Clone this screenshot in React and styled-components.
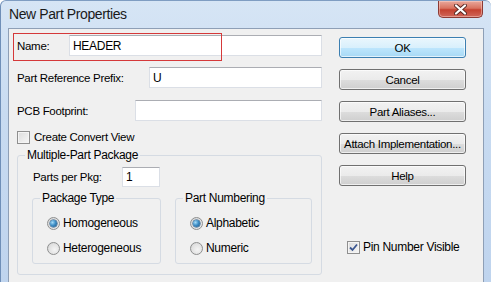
import React from 'react';
import styled, { createGlobalStyle } from 'styled-components';

const GlobalStyle = createGlobalStyle`
  html, body {
    margin: 0;
    padding: 0;
    background: #ffffff;
  }
  body {
    font-family: "Liberation Sans", Arial, sans-serif;
  }
`;

const Window = styled.div`
  position: relative;
  width: 491px;
  height: 282px;
  overflow: hidden;
  display: flex;
  flex-direction: column;
  box-sizing: border-box;
  border-left: 1px solid #6f8fb8;
  border-top: 1px solid #7f9dc2;
  border-top-left-radius: 6px;
  border-top-right-radius: 6px;
  background: linear-gradient(180deg, #d6e5f5 0%, #c8dbf1 40%, #bfd4ee 100%);
`;

const TitleBar = styled.div`
  height: 27px;
  display: flex;
  justify-content: space-between;
  align-items: flex-start;
  flex-shrink: 0;
`;

const Title = styled.div`
  margin: 5px 0 0 8px;
  font-size: 14px;
  letter-spacing: -0.4px;
  line-height: 16px;
  color: #1a1a1a;
`;

const CloseButton = styled.div`
  width: 45px;
  height: 17px;
  margin-right: 8px;
  box-sizing: border-box;
  border: 1px solid #8c3a34;
  border-top: none;
  border-radius: 0 0 5px 5px;
  background: linear-gradient(180deg, #e9a99c 0%, #d9735f 45%, #c4412f 55%, #d0665a 100%);
  box-shadow: inset 0 0 0 1px rgba(255, 220, 210, 0.45);
  display: flex;
  align-items: center;
  justify-content: center;
`;

const Client = styled.div`
  position: relative;
  flex: 1;
  margin: 0 7px 0 7px;
  border: 1px solid #8e9fb6;
  border-bottom: none;
  background: #f0f0f0;
  display: flex;
  font-size: 11.5px;
  font-weight: 400;
  letter-spacing: -0.3px;
  color: #000;
`;

const Highlight = styled.div`
  position: absolute;
  left: 4px;
  top: 4px;
  width: 207px;
  height: 26px;
  border: 1px solid #d5393a;
  pointer-events: none;
`;

const LeftCol = styled.div`
  width: 305px;
  padding: 6px 0 0 8px;
  display: flex;
  flex-direction: column;
`;

const Row = styled.div`
  display: flex;
  align-items: center;
  height: ${p => p.$h || 21}px;
  margin-top: ${p => p.$mt || 0}px;
  padding-left: ${p => p.$pl || 0}px;
`;

const Label = styled.span`
  width: ${p => p.$w}px;
  flex-shrink: 0;
  white-space: nowrap;
`;

const TextBox = styled.div`
  box-sizing: border-box;
  width: ${p => (p.$w ? `${p.$w}px` : 'auto')};
  flex: ${p => (p.$w ? 'none' : 1)};
  height: ${p => p.$h || 21}px;
  background: #ffffff;
  border: 1px solid #dbdfe6;
  border-top-color: #abadb3;
  padding: 0 3px;
  display: flex;
  align-items: center;
  font-size: 12px;
`;

const Check = styled.span`
  box-sizing: border-box;
  width: 13px;
  height: 13px;
  flex-shrink: 0;
  border: 1px solid #8f8f8f;
  background: linear-gradient(135deg, #dcdcdc 0%, #f6f6f6 100%);
  box-shadow: inset 0 0 0 1px #f4f4f4;
  margin-right: ${p => p.$gap || 4}px;
  display: flex;
  align-items: center;
  justify-content: center;
`;

const Group = styled.div`
  box-sizing: border-box;
  width: ${p => p.$w}px;
  border: 1px solid #d5dbe3;
  border-radius: 3px;
  padding: ${p => p.$pad};
  margin-top: ${p => p.$mt || 0}px;
`;

const Legend = styled.span`
  display: block;
  width: fit-content;
  margin: -8px 0 0 ${p => p.$ml ?? 7}px;
  padding: 0 2px;
  line-height: 14px;
  background: #f0f0f0;
  font-size: 12px;
`;

const SubGroups = styled.div`
  display: flex;
  gap: 14px;
  margin-top: 11px;
`;

const RadioRow = styled.div`
  display: flex;
  align-items: center;
  height: 16px;
  margin-top: ${p => p.$mt}px;
  padding-left: 14px;
  font-size: 12px;
`;

const Radio = styled.span`
  box-sizing: border-box;
  width: 13px;
  height: 13px;
  margin-right: 3px;
  border-radius: 50%;
  border: 1px solid #8e8f8f;
  background: radial-gradient(circle at 60% 60%, #f4f4f4 0%, #e1e1e1 60%, #cbcbcb 100%);
  display: flex;
  align-items: center;
  justify-content: center;
`;

const RadioDot = styled.span`
  width: 7px;
  height: 7px;
  border-radius: 50%;
  background: radial-gradient(circle at 35% 35%, #a6dcf8 0%, #3f8fc7 45%, #1c5180 100%);
  box-shadow: 0 0 0 0.5px #1e4d78;
`;

const RightCol = styled.div`
  width: 127px;
  margin-left: 17px;
  padding-top: 8px;
  display: flex;
  flex-direction: column;
  gap: 11px;
`;

const Button = styled.div`
  box-sizing: border-box;
  height: 21px;
  border-radius: 3px;
  border: 1px solid ${p => (p.$default ? '#3c7fb1' : '#707070')};
  background: ${p =>
    p.$default
      ? 'linear-gradient(180deg, #eaf6fd 0%, #d9f0fc 50%, #bee6fd 51%, #a7d9f5 100%)'
      : 'linear-gradient(180deg, #f2f2f2 0%, #ebebeb 50%, #dddddd 51%, #cfcfcf 100%)'};
  box-shadow: inset 0 0 0 1px rgba(255, 255, 255, 0.65);
  display: flex;
  align-items: center;
  justify-content: center;
  font-weight: 400;
  white-space: nowrap;
`;

const PinRow = styled.div`
  display: flex;
  align-items: center;
  margin: 43px 0 0 8px;
  height: 14px;
  font-size: 12px;
`;

const CheckMark = () => (
  <svg width="9" height="9" viewBox="0 0 9 9">
    <path d="M1 4.5 L3.5 7 L8 1.5" fill="none" stroke="#3b5690" strokeWidth="1.8" />
  </svg>
);

const CloseGlyph = () => (
  <svg width="13" height="11" viewBox="0 0 13 11">
    <path d="M2 1.5 L11 9.5 M11 1.5 L2 9.5" stroke="#5a2a25" strokeWidth="4" strokeLinecap="round" />
    <path d="M2 1.5 L11 9.5 M11 1.5 L2 9.5" stroke="#ffffff" strokeWidth="2.2" strokeLinecap="round" />
  </svg>
);

export default function App() {
  return (
    <>
      <GlobalStyle />
      <Window>
        <TitleBar>
          <Title>New Part Properties</Title>
          <CloseButton>
            <CloseGlyph />
          </CloseButton>
        </TitleBar>
        <Client>
          <Highlight />
          <LeftCol>
            <Row>
              <Label $w={52}>Name:</Label>
              <TextBox>HEADER</TextBox>
            </Row>
            <Row $mt={11}>
              <Label $w={132}>Part Reference Prefix:</Label>
              <TextBox>U</TextBox>
            </Row>
            <Row $mt={12}>
              <Label $w={118}>PCB Footprint:</Label>
              <TextBox />
            </Row>
            <Row $mt={8} $h={16}>
              <Check />
              Create Convert View
            </Row>
            <Group $w={305} $mt={10} $pad="0 0 10px 14px">
              <Legend $ml={-7}>Multiple-Part Package</Legend>
              <Row $mt={5} $h={20} $pl={1}>
                <Label $w={89}>Parts per Pkg:</Label>
                <TextBox $w={38} $h={20}>1</TextBox>
              </Row>
              <SubGroups>
                <Group $w={129} $pad="0 0 7px 0">
                  <Legend>Package Type</Legend>
                  <RadioRow $mt={10}>
                    <Radio><RadioDot /></Radio>
                    Homogeneous
                  </RadioRow>
                  <RadioRow $mt={9}>
                    <Radio />
                    Heterogeneous
                  </RadioRow>
                </Group>
                <Group $w={137} $pad="0 0 7px 0">
                  <Legend>Part Numbering</Legend>
                  <RadioRow $mt={10}>
                    <Radio><RadioDot /></Radio>
                    Alphabetic
                  </RadioRow>
                  <RadioRow $mt={9}>
                    <Radio />
                    Numeric
                  </RadioRow>
                </Group>
              </SubGroups>
            </Group>
          </LeftCol>
          <RightCol>
            <Button $default>OK</Button>
            <Button>Cancel</Button>
            <Button>Part Aliases...</Button>
            <Button>Attach Implementation...</Button>
            <Button>Help</Button>
            <PinRow>
              <Check $gap={3}>
                <CheckMark />
              </Check>
              Pin Number Visible
            </PinRow>
          </RightCol>
        </Client>
      </Window>
    </>
  );
}
